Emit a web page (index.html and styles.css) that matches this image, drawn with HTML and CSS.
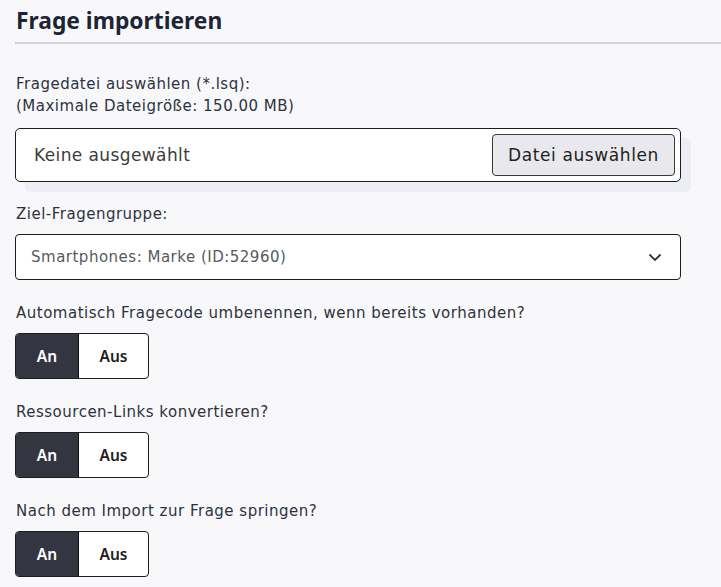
FILE: index.html
```html
<!DOCTYPE html>
<html lang="de">
<head>
<meta charset="utf-8">
<link rel="stylesheet" href="styles.css">
</head>
<body>
<div class="page">
  <h1 class="title">Frage importieren</h1>
  <div class="field first">
    <div class="label">Fragedatei auswählen (*.lsq):<br>(Maximale Dateigröße: 150.00 MB)</div>
    <div class="file-wrap">
      <div class="file-input">
        <span class="file-none">Keine ausgewählt</span>
        <span class="file-btn">Datei auswählen</span>
      </div>
    </div>
  </div>
  <div class="field after-file">
    <div class="label">Ziel-Fragengruppe:</div>
    <div class="select">
      <span>Smartphones: Marke (ID:52960)</span>
      <svg class="chev" width="14" height="9" viewBox="0 0 14 9"><path d="M1.5 1.5 L7 7 L12.5 1.5" fill="none" stroke="#333" stroke-width="1.8"/></svg>
    </div>
  </div>
  <div class="field">
    <div class="label">Automatisch Fragecode umbenennen, wenn bereits vorhanden?</div>
    <div class="toggle"><span class="on">An</span><span class="off">Aus</span></div>
  </div>
  <div class="field">
    <div class="label">Ressourcen-Links konvertieren?</div>
    <div class="toggle"><span class="on">An</span><span class="off">Aus</span></div>
  </div>
  <div class="field">
    <div class="label">Nach dem Import zur Frage springen?</div>
    <div class="toggle"><span class="on">An</span><span class="off">Aus</span></div>
  </div>
</div>
</body>
</html>
```
FILE: styles.css
```css
html, body {
  margin: 0;
  padding: 0;
  background: #f8f8fa;
  font-family: "DejaVu Sans", "Noto Sans", sans-serif;
  color: #1e2230;
}
.page {
  padding: 0 0 0 15px;
}
.title {
  margin: 0;
  padding: 6px 0 6px 1px;
  font-family: "Noto Sans", sans-serif;
  font-size: 22.8px;
  font-weight: 700;
  line-height: 30px;
  color: #1d2433;
  border-bottom: 2px solid #d2d2d8;
}
.field {
  margin-top: 20px;
}
.field.first {
  margin-top: 28px;
}
.field.after-file {
  margin-top: 19px;
}
.label {
  font-size: 15px;
  line-height: 22px;
  letter-spacing: 0.5px;
  color: #2d3240;
  padding: 2px 0 0 1px;
  margin-bottom: 9px;
}
.field.first .label {
  padding-top: 1px;
  margin-bottom: 11px;
}
.file-wrap {
  width: 666px;
}
.file-input {
  box-sizing: border-box;
  height: 54px;
  border: 1px solid #1e1e1e;
  border-radius: 5px;
  background: #fff;
  box-shadow: 10px 10px 0 #ededf6;
  display: flex;
  align-items: center;
  justify-content: space-between;
  padding: 0 5px 0 18px;
}
.file-none {
  font-size: 17px;
  letter-spacing: 0.4px;
  color: #3c3c3c;
}
.file-btn {
  box-sizing: border-box;
  height: 42px;
  width: 183px;
  display: flex;
  align-items: center;
  justify-content: center;
  background: #e9e9ed;
  border: 1px solid #3a3a3a;
  border-radius: 4px;
  font-size: 17px;
  letter-spacing: 0.6px;
  color: #222;
}
.select {
  box-sizing: border-box;
  width: 666px;
  height: 46px;
  border: 1px solid #1e1e1e;
  border-radius: 4px;
  background: #fff;
  display: flex;
  align-items: center;
  justify-content: space-between;
  padding: 0 18px 0 15px;
  font-size: 15px;
  letter-spacing: 0.5px;
  color: #555a60;
}
.chev {
  display: block;
}
.toggle {
  box-sizing: border-box;
  display: flex;
  width: 134px;
  height: 46px;
  border: 1px solid #1e1e1e;
  border-radius: 4px;
  overflow: hidden;
  background: #fff;
  font-family: "Noto Sans", sans-serif;
  font-size: 15.5px;
  font-weight: 600;
}
.toggle span {
  display: flex;
  align-items: center;
  justify-content: center;
}
.toggle .on {
  width: 62px;
  background: #333641;
  color: #fff;
  border-right: 1px solid #111;
}
.toggle .off {
  flex: 1;
  color: #1e1e1e;
}
```
